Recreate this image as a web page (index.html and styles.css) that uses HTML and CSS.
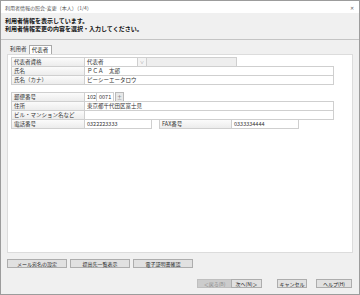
FILE: index.html
```html
<!DOCTYPE html>
<html>
<head>
    <title>利用者情報の照会・変更（本人）</title>
    <link rel="stylesheet" href="styles.css">
</head>
<body>
    <div class="window">
        <div class="titlebar">
            <span>利用者情報の照会-変更（本人）（1/4）</span>
            <span class="close">✕</span>
        </div>
        <div class="intro">
            <div>利用者情報を表示しています。</div>
            <div>利用者情報変更の内容を選択・入力してください。</div>
        </div>
        <div class="tabs">
            <span class="tab-label">利用者</span>
            <span class="tab-box">代表者</span>
        </div>
        <div class="panel">
            <div class="group">
                <div class="row">
                    <div class="cell label">代表者資格</div>
                    <div class="cell value w-select">代表者</div>
                    <div class="cell arrow">∨</div>
                    <div class="cell disabled w-gray"></div>
                </div>
                <div class="row">
                    <div class="cell label">氏名</div>
                    <div class="cell value w-full">ＰＣＡ　太郎</div>
                </div>
                <div class="row">
                    <div class="cell label">氏名（カナ）</div>
                    <div class="cell value w-full">ピーシーエータロウ</div>
                </div>
            </div>
            <div class="group second">
                <div class="row">
                    <div class="cell label">郵便番号</div>
                    <div class="cell value w-zip1">102</div>
                    <div class="cell value w-zip2">0071</div>
                    <div class="cell zip-btn">±</div>
                </div>
                <div class="row">
                    <div class="cell label">住所</div>
                    <div class="cell value w-full">東京都千代田区富士見</div>
                </div>
                <div class="row">
                    <div class="cell label">ビル・マンション名など</div>
                    <div class="cell value w-full"></div>
                </div>
                <div class="row">
                    <div class="cell label">電話番号</div>
                    <div class="cell value w-tel">0322223333</div>
                    <div class="spacer"></div>
                    <div class="cell label w-fax">FAX番号</div>
                    <div class="cell value w-tel">0333334444</div>
                </div>
            </div>
        </div>
        <div class="actions">
            <button class="btn w-action">メール宛名の設定</button>
            <button class="btn w-action">提出先一覧表示</button>
            <button class="btn w-action">電子証明書確認</button>
        </div>
        <div class="footer">
            <button class="btn btn-disabled w-back">＜戻る(B)</button>
            <button class="btn w-next">次へ(N)＞</button>
            <button class="btn w-cancel">キャンセル</button>
            <button class="btn w-help">ヘルプ(H)</button>
        </div>
    </div>
</body>
</html>
```

FILE: styles.css
```css
body {
    margin: 0;
    font-family: "Noto Sans CJK JP", "Noto Sans", sans-serif;
    color: #222;
}

.window {
    width: 360px;
    height: 295px;
    box-sizing: border-box;
    border: 1px solid #9c9c9c;
    background-color: #f0f0f0;
    display: flex;
    flex-direction: column;
}

.titlebar {
    height: 12px;
    background-color: #fff;
    display: flex;
    align-items: center;
    justify-content: space-between;
    padding: 0 5px 0 4px;
    font-size: 5px;
    color: #555;
}

.close {
    font-size: 5px;
    color: #666;
}

.intro {
    height: 22px;
    padding: 4px 0 0 4px;
    border-bottom: 1px solid #c4c4c4;
    font-size: 6px;
    line-height: 8px;
    font-weight: bold;
    color: #111;
}

.tabs {
    height: 14px;
    display: flex;
    align-items: flex-end;
    padding-left: 9px;
    font-size: 5.5px;
}

.tab-label {
    line-height: 9px;
    margin-right: 2px;
    color: #333;
}

.tab-box {
    height: 9px;
    box-sizing: border-box;
    width: 23px;
    border: 1px solid #a8a8a8;
    border-bottom: none;
    background-color: #fff;
    line-height: 8px;
    text-align: center;
}

.panel {
    height: 199px;
    box-sizing: border-box;
    margin: 0 6px 0 6px;
    padding: 2px 0 0 3px;
    background-color: #fff;
    border: 1px solid #dcdcdc;
}

.group.second {
    margin-top: 8px;
}

.row {
    display: flex;
    height: 9px;
}

.cell {
    box-sizing: border-box;
    height: 10px;
    border: 1px solid #cfcfcf;
    margin-left: -1px;
    padding-left: 2px;
    font-size: 5.5px;
    line-height: 8px;
    white-space: nowrap;
    overflow: hidden;
}

.row .cell:first-child {
    margin-left: 0;
}

.label {
    width: 74px;
    background: linear-gradient(#fbfbfb, #ececec);
    color: #333;
}

.value {
    background-color: #fff;
    color: #333;
}

.w-select { width: 54px; }
.w-gray { width: 91px; }
.w-full { width: 250px; }
.w-zip1 { width: 13px; }
.w-zip2 { width: 18px; }
.w-tel { width: 68px; }
.w-fax { width: 73px; margin-left: 0; }

.arrow {
    width: 10px;
    padding: 0;
    text-align: center;
    font-size: 4px;
    color: #777;
    background-color: #f4f4f4;
}

.disabled {
    background-color: #eeeeee;
}

.zip-btn {
    width: 9px;
    padding: 0;
    margin-left: 1px;
    text-align: center;
    font-size: 5px;
    color: #555;
    background-color: #e8e8e8;
    border-color: #b9b9b9;
}

.spacer {
    width: 7px;
}

.actions {
    display: flex;
    gap: 3px;
    padding: 6px 0 0 6px;
    height: 10px;
}

.footer {
    display: flex;
    padding: 10px 0 0 0;
    height: 10px;
}

.btn {
    box-sizing: border-box;
    height: 9px;
    padding: 0;
    border: 1px solid #adadad;
    background-color: #e1e1e1;
    font-family: "Noto Sans CJK JP", "Noto Sans", sans-serif;
    font-size: 5px;
    line-height: 7px;
    color: #222;
}

.w-action { width: 60px; }

.w-back {
    width: 35px;
    margin-left: 196px;
}
.w-next { width: 31px; margin-left: -1px; }
.w-cancel { width: 30px; margin-left: 15px; }
.w-help { width: 36px; margin-left: 9px; }

.btn-disabled {
    background-color: #cccccc;
    border-color: #bfbfbf;
    color: #8a8a8a;
}
```
